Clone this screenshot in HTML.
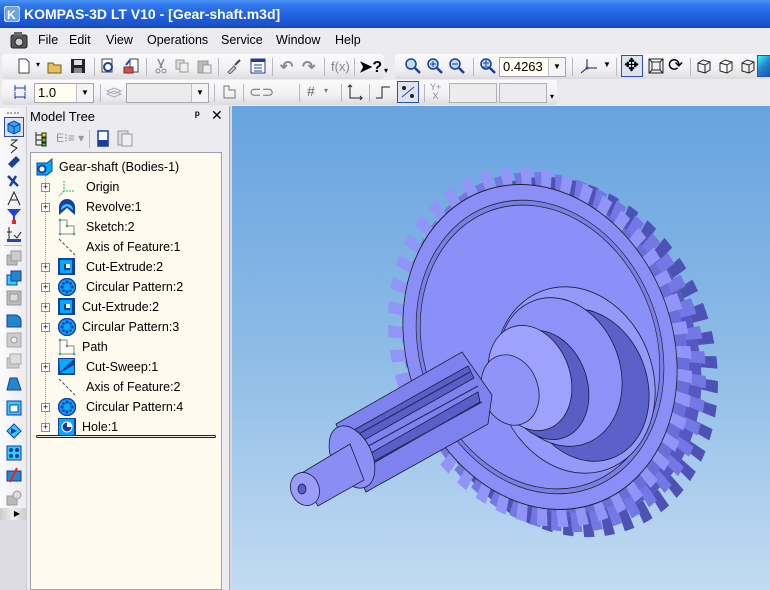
<!DOCTYPE html>
<html><head><meta charset="utf-8">
<style>
*{margin:0;padding:0;box-sizing:border-box}
body{width:770px;height:590px;overflow:hidden;background:#ebeaef;font-family:"Liberation Sans",sans-serif;font-size:12px;position:relative}
.abs{position:absolute}
#title{left:0;top:0;width:770px;height:28px;background:linear-gradient(#4a94f4 0%,#2f76ec 20%,#1f5fdc 60%,#1b52cc 90%,#1544b0 100%);color:#fff;font-weight:bold;font-size:14px;line-height:28px;padding-left:24px}
#menu{left:0;top:28px;width:770px;height:25px;background:#ecebf0;font-size:12.5px}
#menu span{position:absolute;top:5px}
.tb{background:linear-gradient(#fbfbfc,#f1f1f3 60%,#dcdce0);border-radius:3px;height:25px}
.sep{position:absolute;width:1px;height:18px;background:#b8b8c0;top:4px}
.ic{position:absolute;width:16px;height:16px;top:4px}
.combo{position:absolute;top:3px;height:20px;border:1px solid #a6a6b0;background:#fffcf0;font-size:13px;padding-left:3px;line-height:18px}
.combo b{position:absolute;right:0;top:0;width:17px;height:18px;border-left:1px solid #c0c0c8;background:#f4f4f4;font-size:8px;text-align:center;line-height:18px;font-weight:normal}
#tree{left:30px;top:152px;width:192px;height:438px;background:#fffaee;border:1px solid #a0a0a8}
.it{position:absolute;font-size:12.5px;white-space:nowrap}
.plus{position:absolute;width:9px;height:9px;border:1px solid #8a8a9a;background:#fff;font-size:9px;line-height:7px;text-align:center;color:#000}
.fi{position:absolute;width:18px;height:18px}
.vt{position:absolute;left:6px;width:16px;height:16px}
</style></head><body>
<div id="title" class="abs">KOMPAS-3D LT V10 - [Gear-shaft.m3d]</div>
<svg class="abs" style="left:4px;top:6px" width="16" height="16"><rect x="0" y="0" width="16" height="16" rx="4" fill="#6fa3e8" stroke="#fff"/><text x="3" y="13" font-size="12" font-weight="bold" fill="#fff" font-family="Liberation Sans">K</text></svg>
<div id="menu" class="abs">
<svg style="position:absolute;left:10px;top:4px" width="20" height="17"><rect x="1" y="3" width="16" height="13" rx="2" fill="#555" stroke="#222"/><circle cx="9" cy="10" r="4" fill="#ccc" stroke="#222"/><rect x="4" y="0" width="8" height="4" fill="#666"/></svg>
<span style="left:38px">File</span><span style="left:69px">Edit</span><span style="left:106px">View</span><span style="left:147px">Operations</span><span style="left:221px">Service</span><span style="left:276px">Window</span><span style="left:335px">Help</span>
</div>
<div class="abs tb" style="left:2px;top:54px;width:382px">
<svg class="ic" style="left:14px" viewBox="0 0 16 16"><path d="M3 1h7l3 3v11H3z" fill="#fff" stroke="#444"/></svg>
<span class="abs" style="left:34px;top:6px;font-size:8px">▾</span>
<svg class="ic" style="left:45px" viewBox="0 0 16 16"><path d="M1 5h5l1 2h7v8H1z" fill="#e8c060" stroke="#7a5a10"/></svg>
<svg class="ic" style="left:68px" viewBox="0 0 16 16"><rect x="1" y="1" width="14" height="14" fill="#223" /><rect x="4" y="2" width="8" height="5" fill="#ddd"/><rect x="4" y="10" width="8" height="5" fill="#888"/></svg>
<div class="sep" style="left:92px"></div>
<svg class="ic" style="left:98px" viewBox="0 0 16 16"><rect x="2" y="1" width="10" height="13" fill="#fff" stroke="#444"/><circle cx="8" cy="9" r="4" fill="none" stroke="#1a3ea0" stroke-width="2"/></svg>
<svg class="ic" style="left:121px" viewBox="0 0 16 16"><rect x="7" y="1" width="8" height="13" fill="#fff" stroke="#444"/><rect x="1" y="9" width="9" height="6" fill="#e44" stroke="#444"/><path d="M3 7l4-5" stroke="#24c" stroke-width="2"/></svg>
<div class="sep" style="left:144px"></div>
<svg class="ic" style="left:151px" viewBox="0 0 16 16"><path d="M5 1l4 9M11 1l-4 9" stroke="#888" stroke-width="1.5"/><circle cx="5" cy="13" r="2" fill="none" stroke="#888"/><circle cx="11" cy="13" r="2" fill="none" stroke="#888"/></svg>
<svg class="ic" style="left:172px" viewBox="0 0 16 16"><rect x="2" y="2" width="8" height="9" fill="#ddd" stroke="#999"/><rect x="6" y="5" width="8" height="9" fill="#eee" stroke="#999"/></svg>
<svg class="ic" style="left:194px" viewBox="0 0 16 16"><rect x="2" y="3" width="10" height="12" fill="#bbb" stroke="#999"/><rect x="7" y="7" width="8" height="8" fill="#eee" stroke="#999"/></svg>
<div class="sep" style="left:216px"></div>
<svg class="ic" style="left:224px" viewBox="0 0 16 16"><path d="M2 14l6-6 2 2-6 6z" fill="#ccc" stroke="#666"/><path d="M9 7l5-5" stroke="#444" stroke-width="2"/></svg>
<svg class="ic" style="left:248px" viewBox="0 0 16 16"><rect x="1" y="1" width="14" height="14" fill="#fff" stroke="#1a3ea0"/><rect x="1" y="1" width="14" height="3" fill="#1a3ea0"/><path d="M4 7h8M4 10h8M4 13h8" stroke="#1a3ea0"/></svg>
<div class="sep" style="left:270px"></div>
<span class="abs" style="left:278px;top:3px;color:#889;font-size:16px;font-weight:bold">↶</span>
<span class="abs" style="left:300px;top:3px;color:#889;font-size:16px;font-weight:bold">↷</span>
<div class="sep" style="left:322px"></div>
<span class="abs" style="left:329px;top:5px;color:#888;font-size:13px">f(x)</span>
<div class="sep" style="left:352px"></div>
<span class="abs" style="left:357px;top:3px;font-size:16px;font-weight:bold">➤?</span>
<span class="abs" style="left:382px;top:12px;font-size:8px">▾</span>
</div>
<div class="abs tb" style="left:395px;top:54px;width:380px">
<svg class="ic" style="left:10px" viewBox="0 0 16 16"><circle cx="6" cy="6" r="5" fill="#bde" stroke="#1a3ea0" stroke-width="1.5"/><path d="M10 10l5 5" stroke="#1a3ea0" stroke-width="2.5"/></svg>
<svg class="ic" style="left:32px" viewBox="0 0 16 16"><circle cx="6" cy="6" r="5" fill="#bde" stroke="#1a3ea0" stroke-width="1.5"/><path d="M10 10l5 5" stroke="#1a3ea0" stroke-width="2.5"/><path d="M3 6h6M6 3v6" stroke="#1a3ea0"/></svg>
<svg class="ic" style="left:54px" viewBox="0 0 16 16"><circle cx="6" cy="6" r="5" fill="#bde" stroke="#1a3ea0" stroke-width="1.5"/><path d="M10 10l5 5" stroke="#1a3ea0" stroke-width="2.5"/><path d="M3 6h6" stroke="#1a3ea0"/></svg>
<div class="sep" style="left:78px"></div>
<svg class="ic" style="left:85px" viewBox="0 0 16 16"><circle cx="6" cy="6" r="5" fill="#bde" stroke="#1a3ea0" stroke-width="1.5"/><path d="M10 10l5 5" stroke="#1a3ea0" stroke-width="2.5"/><path d="M3 5h6M6 2v6M3 9h6" stroke="#1a3ea0"/></svg>
<div class="combo" style="left:104px;width:67px;background:#fffcf0">0.4263<b>▼</b></div>
<div class="sep" style="left:177px"></div>
<svg class="ic" style="left:184px;width:22px" viewBox="0 0 22 16"><path d="M8 10V1M8 10h10M8 10l-6 5" stroke="#222" fill="none"/><circle cx="8" cy="10" r="1.5" fill="#24c"/></svg>
<span class="abs" style="left:208px;top:6px;font-size:8px">▼</span>
<div class="sep" style="left:221px"></div>
<div class="abs" style="left:226px;top:1px;width:22px;height:22px;border:1px solid #2a50a8;background:#dfe3f0"></div>
<span class="abs" style="left:229px;top:1px;font-size:18px">✥</span>
<svg class="ic" style="left:253px" viewBox="0 0 16 16"><rect x="1" y="1" width="14" height="14" fill="none" stroke="#222"/><rect x="4" y="4" width="8" height="8" fill="none" stroke="#222"/><path d="M1 1l3 3M15 1l-3 3M1 15l3-3M15 15l-3-3" stroke="#222"/></svg>
<span class="abs" style="left:273px;top:1px;font-size:18px">⟳</span>
<div class="sep" style="left:295px"></div>
<svg class="ic" style="left:301px" viewBox="0 0 16 16"><path d="M2 5l5-3 7 2v8l-5 3-7-2z M2 5l7 2 5-3 M9 7v8" fill="none" stroke="#222"/></svg>
<svg class="ic" style="left:323px" viewBox="0 0 16 16"><path d="M2 5l5-3 7 2v8l-5 3-7-2z M2 5l7 2 5-3 M9 7v8" fill="#fff" stroke="#222"/></svg>
<svg class="ic" style="left:345px" viewBox="0 0 16 16"><path d="M2 5l5-3 7 2v8l-5 3-7-2z M2 5l7 2 5-3 M9 7v8" fill="#eee" stroke="#222"/></svg>
<div class="abs" style="left:362px;top:1px;width:20px;height:22px;border:1px solid #2a50a8;background:linear-gradient(135deg,#3ff 0%,#28c 40%,#14a 100%)"></div>
</div>
<div class="abs tb" style="left:2px;top:80px;width:555px">
<svg class="ic" style="left:10px" viewBox="0 0 16 16"><path d="M3 4h10M3 1v6M13 1v6M3 8v7M13 8v7M3 13h10" stroke="#1a3ea0" fill="none"/></svg>
<div class="combo" style="left:32px;width:60px">1.0<b>▼</b></div>
<div class="sep" style="left:98px"></div>
<svg class="ic" style="left:104px" viewBox="0 0 16 16"><path d="M1 10l7-3 7 3-7 3z M1 7l7-3 7 3-7 3z" fill="none" stroke="#aab"/></svg>
<div class="combo" style="left:124px;width:83px;background:#ececef">&nbsp;<b>▼</b></div>
<div class="sep" style="left:212px"></div>
<svg class="ic" style="left:219px" viewBox="0 0 16 16"><path d="M3 2v12h11V6H8V2z" fill="none" stroke="#777"/></svg>
<div class="sep" style="left:241px"></div>
<span class="abs" style="left:247px;top:3px;font-size:15px;color:#777">⊂⊃</span>
<div class="sep" style="left:297px"></div>
<span class="abs" style="left:305px;top:3px;font-size:14px;color:#666">#</span><span class="abs" style="left:322px;top:6px;font-size:8px;color:#777">▾</span>
<div class="sep" style="left:339px"></div>
<svg class="ic" style="left:345px" viewBox="0 0 16 16"><path d="M3 1v13h12M1 3l2-2 2 2M13 12l2 2-2 2" fill="none" stroke="#222"/></svg>
<div class="sep" style="left:367px"></div>
<svg class="ic" style="left:373px" viewBox="0 0 16 16"><path d="M1 14h6V3h8" fill="none" stroke="#222"/></svg>
<div class="abs" style="left:395px;top:1px;width:22px;height:22px;border:1px solid #2a50a8;background:#dfe3f0"></div>
<svg class="ic" style="left:398px;top:4px" viewBox="0 0 16 16"><path d="M2 13L14 3" stroke="#24c"/><circle cx="4" cy="4" r="2" fill="#222"/><circle cx="12" cy="12" r="2" fill="#222"/></svg>
<div class="sep" style="left:422px"></div>
<span class="abs" style="left:428px;top:3px;font-size:9px;color:#889;line-height:9px">Y+<br>&nbsp;X</span>
<div class="abs" style="left:447px;top:3px;width:48px;height:20px;border:1px solid #b0b0b8;background:#ececef"></div>
<div class="abs" style="left:497px;top:3px;width:48px;height:20px;border:1px solid #b0b0b8;background:#ececef"></div>
<span class="abs" style="left:548px;top:12px;font-size:8px">▾</span>
</div>
<div class="abs" style="left:0;top:108px;width:26px;height:412px;background:linear-gradient(90deg,#fbfbfc,#ececf0);border-radius:0 0 4px 0"></div>
<div class="abs" style="left:7px;top:112px;width:12px;border-top:2px dotted #aaa"></div>
<div class="abs" style="left:4px;top:117px;width:20px;height:20px;border:1px solid #2a50a8;background:#dfe3f0"></div>
<svg class="vt" style="top:119px" viewBox="0 0 16 16"><path d="M2 5l6-3 6 3v7l-6 3-6-3z" fill="#2aa8f0" stroke="#1a3ea0"/><path d="M2 5l6 3 6-3M8 8v7" stroke="#1a3ea0" fill="none"/></svg>
<svg class="vt" style="top:138px" viewBox="0 0 16 16"><path d="M5 2h6l-6 5 6 3-6 5" stroke="#222" fill="none"/></svg>
<svg class="vt" style="top:154px" viewBox="0 0 16 16"><path d="M2 10l8-8 4 4-8 8z" fill="#1a3ea0"/></svg>
<svg class="vt" style="top:172px" viewBox="0 0 16 16"><path d="M2 4l10 10M4 14l6-10" stroke="#1a3ea0" stroke-width="2.5"/></svg>
<svg class="vt" style="top:190px" viewBox="0 0 16 16"><path d="M2 15L8 2l6 13" stroke="#222" fill="none"/><path d="M5 10h6" stroke="#222"/></svg>
<svg class="vt" style="top:208px" viewBox="0 0 16 16"><path d="M1 1h14L9 8v5H7V8z" fill="#24c"/><rect x="6" y="12" width="4" height="4" fill="#e22"/></svg>
<svg class="vt" style="top:226px" viewBox="0 0 16 16"><path d="M3 1v12M1 6h5" stroke="#222"/><rect x="1" y="13" width="14" height="3" fill="#24c"/><path d="M8 9l3 3 4-6" stroke="#222" fill="none"/></svg>
<div class="abs" style="left:4px;top:245px;width:18px;border-top:1px solid #bbb"></div>
<svg class="vt" style="top:250px" viewBox="0 0 16 16"><rect x="1" y="5" width="10" height="10" fill="#bbb" stroke="#999"/><rect x="5" y="1" width="10" height="10" fill="#ccc" stroke="#999"/></svg>
<svg class="vt" style="top:270px" viewBox="0 0 16 16"><rect x="1" y="5" width="10" height="10" fill="#3cf" stroke="#1a3ea0"/><rect x="5" y="1" width="10" height="10" fill="#28c" stroke="#1a3ea0"/></svg>
<svg class="vt" style="top:290px" viewBox="0 0 16 16"><rect x="1" y="1" width="14" height="14" fill="#bbb" stroke="#999"/><rect x="4" y="4" width="8" height="7" fill="#ddd" stroke="#999"/></svg>
<svg class="vt" style="top:312px" viewBox="0 0 16 16"><path d="M1 15V3h8a6 6 0 0 1 6 6v6z" fill="#28c" stroke="#1a3ea0"/></svg>
<svg class="vt" style="top:332px" viewBox="0 0 16 16"><rect x="1" y="1" width="14" height="14" fill="#ccc" stroke="#aaa"/><circle cx="8" cy="8" r="3" fill="#eee" stroke="#999"/></svg>
<svg class="vt" style="top:353px" viewBox="0 0 16 16"><rect x="1" y="5" width="12" height="10" fill="#ccc" stroke="#aaa"/><rect x="4" y="1" width="11" height="10" fill="#ddd" stroke="#aaa"/></svg>
<svg class="vt" style="top:375px" viewBox="0 0 16 16"><path d="M1 15l3-12h7l4 12z" fill="#28c" stroke="#1a3ea0"/></svg>
<svg class="vt" style="top:400px" viewBox="0 0 16 16"><rect x="1" y="1" width="14" height="14" fill="#3cf" stroke="#1a3ea0"/><rect x="4" y="5" width="8" height="7" fill="#fff" stroke="#1a3ea0"/></svg>
<svg class="vt" style="top:423px" viewBox="0 0 16 16"><path d="M1 8l7-7 7 7-7 7z" fill="#3cf" stroke="#1a3ea0"/><path d="M5 5l6 3-6 3z" fill="#1a3ea0"/></svg>
<svg class="vt" style="top:445px" viewBox="0 0 16 16"><rect x="1" y="1" width="14" height="14" fill="#3cf" stroke="#1a3ea0"/><circle cx="5" cy="5" r="2" fill="#1a3ea0"/><circle cx="11" cy="5" r="2" fill="#1a3ea0"/><circle cx="5" cy="11" r="2" fill="#1a3ea0"/><circle cx="11" cy="11" r="2" fill="#1a3ea0"/></svg>
<svg class="vt" style="top:467px" viewBox="0 0 16 16"><rect x="1" y="4" width="14" height="10" fill="#28c" stroke="#1a3ea0"/><path d="M4 15L11 1" stroke="#e22" stroke-width="2"/></svg>
<svg class="vt" style="top:490px" viewBox="0 0 16 16"><rect x="1" y="6" width="10" height="9" fill="#bbb" stroke="#999"/><circle cx="11" cy="5" r="4" fill="#ddd" stroke="#999"/></svg>
<div class="abs" style="left:0;top:508px;width:26px;height:12px;background:linear-gradient(90deg,#ccc,#eee,#ccc);font-size:8px;text-align:right;padding-right:6px;line-height:12px">▶</div>
<div class="abs" style="left:0;top:520px;width:26px;height:70px;background:#dcdce2"></div>
<div class="abs" style="left:26px;top:106px;width:203px;height:484px;background:#ecebf0;border-left:1px solid #ccc"></div>
<span class="abs" style="left:30px;top:109px;font-size:13px">Model Tree</span>
<span class="abs" style="left:195px;top:108px;font-size:12px;font-weight:bold">ᵖ</span>
<span class="abs" style="left:211px;top:107px;font-size:14px">✕</span>
<svg class="abs" style="left:33px;top:131px" width="16" height="16"><path d="M3 1v13M3 4h6M3 9h6M3 14h6" stroke="#222" fill="none"/><rect x="9" y="2" width="4" height="4" fill="#ee0" stroke="#222"/><rect x="9" y="7" width="4" height="4" fill="#4c4" stroke="#222"/><rect x="9" y="12" width="4" height="3" fill="#4c4" stroke="#222"/></svg>
<span class="abs" style="left:56px;top:131px;font-size:12px;color:#999">E⁝≡ ▾</span>
<div class="abs" style="left:89px;top:130px;width:1px;height:18px;background:#bbb"></div>
<svg class="abs" style="left:97px;top:130px" width="12" height="17"><rect x="1" y="1" width="10" height="15" fill="#fff" stroke="#1a3ea0" stroke-width="1.5"/><rect x="1" y="10" width="10" height="6" fill="#1a3ea0"/></svg>
<svg class="abs" style="left:117px;top:130px" width="16" height="17"><rect x="1" y="1" width="10" height="14" fill="#ddd" stroke="#999"/><rect x="5" y="4" width="10" height="12" fill="#eee" stroke="#999"/></svg>
<div id="tree" class="abs"></div>
<div class="abs" style="left:45px;top:175px;height:252px;border-left:1px dotted #999"></div>
<svg class="fi" style="left:36px;top:158px" viewBox="0 0 18 18"><path d="M1 5h10l5-4v12l-5 4H1z" fill="#0af" stroke="#1a3ea0"/><circle cx="6" cy="11" r="3.5" fill="#fff" stroke="#1a3ea0" stroke-width="2"/></svg>
<span class="it" style="left:59px;top:160px">Gear-shaft (Bodies-1)</span>
<div class="plus" style="left:41px;top:183px">+</div><svg class="fi" style="left:58px;top:179px" viewBox="0 0 18 18"><path d="M6 2v10h10M6 12l-5 5" stroke="#2a8" fill="none" stroke-dasharray="2 1"/></svg><span class="it" style="left:86px;top:180px">Origin</span>
<div class="plus" style="left:41px;top:203px">+</div><svg class="fi" style="left:58px;top:198px" viewBox="0 0 18 18"><path d="M1 17V9a8 8 0 0 1 16 0v8l-8-7z" fill="#1a3ea0"/><path d="M3 12a6 6 0 0 1 12 0l-6-4z" fill="#3cf"/></svg><span class="it" style="left:86px;top:200px">Revolve:1</span>
<svg class="fi" style="left:58px;top:218px" viewBox="0 0 18 18"><path d="M2 2v14h14V8h-7V2z" fill="none" stroke="#889"/><circle cx="2" cy="2" r="1.3" fill="#3aa"/><circle cx="9" cy="8" r="1.3" fill="#3aa"/><circle cx="16" cy="16" r="1.3" fill="#3aa"/><circle cx="2" cy="16" r="1.3" fill="#3aa"/></svg><span class="it" style="left:86px;top:220px">Sketch:2</span>
<svg class="fi" style="left:58px;top:238px" viewBox="0 0 18 18"><path d="M1 1l16 16" stroke="#356" stroke-dasharray="3 2"/></svg><span class="it" style="left:86px;top:240px">Axis of Feature:1</span>
<div class="plus" style="left:41px;top:263px">+</div><svg class="fi" style="left:58px;top:258px" viewBox="0 0 18 18"><rect x="0" y="0" width="17" height="17" fill="#1a3ea0"/><rect x="2" y="2" width="12" height="13" fill="#0af"/><rect x="6" y="6" width="6" height="6" fill="#1a3ea0"/><rect x="8" y="6" width="4" height="4" fill="#fff"/></svg><span class="it" style="left:86px;top:260px">Cut-Extrude:2</span>
<div class="plus" style="left:41px;top:283px">+</div><svg class="fi" style="left:58px;top:278px" viewBox="0 0 18 18"><circle cx="9" cy="9" r="8.5" fill="#0af" stroke="#1a3ea0" stroke-width="1.5"/><g fill="#1a3ea0"><circle cx="9" cy="4" r="1.6"/><circle cx="9" cy="14" r="1.6"/><circle cx="4" cy="9" r="1.6"/><circle cx="14" cy="9" r="1.6"/><circle cx="5.5" cy="5.5" r="1.4"/><circle cx="12.5" cy="12.5" r="1.4"/><circle cx="12.5" cy="5.5" r="1.4"/><circle cx="5.5" cy="12.5" r="1.4"/></g></svg><span class="it" style="left:86px;top:280px">Circular Pattern:2</span>
<div class="plus" style="left:41px;top:303px">+</div><svg class="fi" style="left:58px;top:298px" viewBox="0 0 18 18"><rect x="0" y="0" width="17" height="17" fill="#1a3ea0"/><rect x="2" y="2" width="12" height="13" fill="#0af"/><rect x="6" y="6" width="6" height="6" fill="#1a3ea0"/><rect x="8" y="6" width="4" height="4" fill="#fff"/></svg><span class="it" style="left:82px;top:300px">Cut-Extrude:2</span>
<div class="plus" style="left:41px;top:323px">+</div><svg class="fi" style="left:58px;top:318px" viewBox="0 0 18 18"><circle cx="9" cy="9" r="8.5" fill="#0af" stroke="#1a3ea0" stroke-width="1.5"/><g fill="#1a3ea0"><circle cx="9" cy="4" r="1.6"/><circle cx="9" cy="14" r="1.6"/><circle cx="4" cy="9" r="1.6"/><circle cx="14" cy="9" r="1.6"/><circle cx="5.5" cy="5.5" r="1.4"/><circle cx="12.5" cy="12.5" r="1.4"/><circle cx="12.5" cy="5.5" r="1.4"/><circle cx="5.5" cy="12.5" r="1.4"/></g></svg><span class="it" style="left:82px;top:320px">Circular Pattern:3</span>
<svg class="fi" style="left:58px;top:338px" viewBox="0 0 18 18"><path d="M2 2v14h14V8h-7V2z" fill="none" stroke="#889"/><circle cx="2" cy="2" r="1.3" fill="#3aa"/><circle cx="9" cy="8" r="1.3" fill="#3aa"/><circle cx="16" cy="16" r="1.3" fill="#3aa"/><circle cx="2" cy="16" r="1.3" fill="#3aa"/></svg><span class="it" style="left:82px;top:340px">Path</span>
<div class="plus" style="left:41px;top:363px">+</div><svg class="fi" style="left:58px;top:358px" viewBox="0 0 18 18"><rect x="0" y="0" width="17" height="17" fill="#1a3ea0"/><path d="M1 1h15L2 14z" fill="#0af"/><path d="M2 15l14-8v8z" fill="#0af"/></svg><span class="it" style="left:86px;top:360px">Cut-Sweep:1</span>
<svg class="fi" style="left:58px;top:378px" viewBox="0 0 18 18"><path d="M1 1l16 16" stroke="#356" stroke-dasharray="3 2"/></svg><span class="it" style="left:86px;top:380px">Axis of Feature:2</span>
<div class="plus" style="left:41px;top:403px">+</div><svg class="fi" style="left:58px;top:398px" viewBox="0 0 18 18"><circle cx="9" cy="9" r="8.5" fill="#0af" stroke="#1a3ea0" stroke-width="1.5"/><g fill="#1a3ea0"><circle cx="9" cy="4" r="1.6"/><circle cx="9" cy="14" r="1.6"/><circle cx="4" cy="9" r="1.6"/><circle cx="14" cy="9" r="1.6"/><circle cx="5.5" cy="5.5" r="1.4"/><circle cx="12.5" cy="12.5" r="1.4"/><circle cx="12.5" cy="5.5" r="1.4"/><circle cx="5.5" cy="12.5" r="1.4"/></g></svg><span class="it" style="left:86px;top:400px">Circular Pattern:4</span>
<div class="plus" style="left:41px;top:423px">+</div><div class="fi" style="left:58px;top:418px;background:#0af;border:1px solid #1a3ea0;border-width:1px 2px 1px 1px"></div><svg class="fi" style="left:58px;top:418px" viewBox="0 0 18 18"><circle cx="9" cy="9" r="5" fill="#1a3ea0"/><path d="M9 4a5 5 0 0 1 5 5H9z" fill="#fff"/><circle cx="9" cy="9" r="5" fill="none" stroke="#fff"/></svg><span class="it" style="left:82px;top:420px">Hole:1</span>
<div class="abs" style="left:36px;top:435px;width:180px;height:3px;border:1px solid #222;border-radius:2px;background:#eee"></div>
<div class="abs" style="left:229px;top:106px;width:3px;height:484px;background:#d8d8dc;border-left:1px solid #aaa"></div>
<div class="abs" style="left:232px;top:106px;width:538px;height:484px;background:linear-gradient(#67a3e0 0%,#8dbbe6 50%,#c2dbf2 100%)"></div>
<svg class="abs" style="left:232px;top:106px" width="538" height="484" viewBox="232 106 538 484">
<g transform="translate(566,357) rotate(-20) scale(0.8,1)">
<circle r="174" fill="none" stroke="#4e52b4" stroke-width="20" stroke-dasharray="12.1 12.1"/>
<circle r="164" fill="#5458c0"/>
</g>
<g transform="translate(554,352) rotate(-20) scale(0.8,1)">
<circle r="174" fill="none" stroke="#7478e4" stroke-width="20" stroke-dasharray="12.1 12.1"/>
<circle r="164" fill="#6a6ed8"/>
</g>
<g transform="translate(540,347) rotate(-20) scale(0.8,1)">
<circle r="174" fill="none" stroke="#9195f8" stroke-width="20" stroke-dasharray="12.1 12.1"/>
<circle r="166" fill="#8a8ef6" stroke="#222" stroke-width="1"/>
<circle r="150" fill="#7a7ee8" stroke="#222" stroke-width="0.8"/>
<circle r="145" fill="#8b8ff8" stroke="#222" stroke-width="0.8"/>
</g>
<g stroke="#1c1c3c" stroke-width="0.8">
<ellipse cx="575" cy="380" rx="78" ry="95" transform="rotate(-20 575 380)" fill="#9599fa"/>
<ellipse cx="585" cy="385" rx="62" ry="78" transform="rotate(-20 585 385)" fill="#5c60c8"/>
<ellipse cx="560" cy="372" rx="60" ry="76" transform="rotate(-20 560 372)" fill="#8e92f8"/>
<ellipse cx="545" cy="385" rx="42" ry="56" transform="rotate(-20 545 385)" fill="#5a5ec4"/>
<ellipse cx="530" cy="378" rx="40" ry="54" transform="rotate(-20 530 378)" fill="#9ea2fc"/>
<ellipse cx="510" cy="390" rx="28" ry="36" transform="rotate(-20 510 390)" fill="#9094f8"/>
<path d="M336 424 L462 352 L492 395 L488 424 L366 492 Z" fill="#7e82ee"/>
<path d="M345 435 L468 366 L474 378 L350 448Z" fill="#5a5ec8"/>
<path d="M355 462 L478 392 L480 402 L358 472Z" fill="#5a5ec8"/>
<path d="M348 440 L470 372 M352 455 L478 386 M358 470 L482 402" stroke="#2a2a5a" stroke-width="1.2" fill="none"/>
<ellipse cx="352" cy="457" rx="20" ry="33" transform="rotate(-25 352 457)" fill="#8c90f6"/>
<path d="M300 474 L350 444 L364 480 L318 506 Z" fill="#8a8ef4"/>
<ellipse cx="305" cy="489" rx="14" ry="17" transform="rotate(-25 305 489)" fill="#9a9efa"/>
<ellipse cx="302" cy="489" rx="4" ry="5" fill="#5a5ec4"/>
</g>
</svg>
</body></html>
